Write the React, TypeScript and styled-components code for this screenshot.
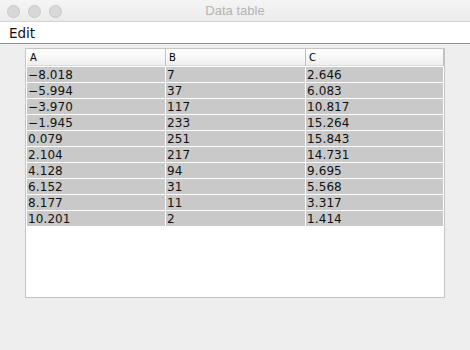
import React from "react";
import styled, { createGlobalStyle } from "styled-components";

const GlobalStyle = createGlobalStyle`
    html, body {
        margin: 0;
        padding: 0;
        background: #ececec;
    }
`;

const Window = styled.div`
    width: 470px;
    height: 350px;
    display: flex;
    flex-direction: column;
    background: #eeeeee;
    overflow: hidden;
`;

const TitleBar = styled.div`
    height: 21px;
    position: relative;
    display: flex;
    align-items: center;
    justify-content: center;
    background: linear-gradient(#f5f5f5, #ebebeb);
    border-bottom: 1px solid #d2d2d2;
`;

const Lights = styled.div`
    position: absolute;
    left: 7px;
    top: 5px;
    display: flex;
    gap: 8px;
`;

const Light = styled.span`
    width: 11px;
    height: 11px;
    border-radius: 50%;
    background: #d8d8d8;
    border: 0.5px solid #c8c8c8;
`;

const Title = styled.span`
    font-family: "Liberation Sans", Arial, sans-serif;
    font-size: 13px;
    color: #b4b4b4;
`;

const MenuBar = styled.div`
    height: 21px;
    display: flex;
    align-items: center;
    padding-left: 9px;
    background: #ffffff;
    border-bottom: 1px solid #909090;
`;

const MenuItem = styled.span`
    font-family: "DejaVu Sans", sans-serif;
    font-size: 13.5px;
    color: #111;
`;

const Content = styled.div`
    padding: 4px 25px 0 25px;
`;

const Panel = styled.div`
    height: 248px;
    background: #ffffff;
    border: 1px solid #c4c4c4;
    padding: 0 2px 0 1px;
`;

const Grid = styled.div`
    display: grid;
    grid-template-columns: 138px 139px 137px;
    column-gap: 1px;
    row-gap: 1px;
    width: 416px;
`;

const HeadCell = styled.div<{ $last?: boolean }>`
    height: 17px;
    box-sizing: border-box;
    padding: 1px 0 0 3px;
    display: flex;
    align-items: center;
    font-family: "DejaVu Sans", sans-serif;
    font-size: 10px;
    color: #000;
    background: linear-gradient(#ffffff, #efefef);
    border-bottom: 1px solid #dcdcdc;
    box-shadow: 1px 0 0 #c0c0c0;
`;

const Cell = styled.div`
    height: 15px;
    padding-left: 1px;
    display: flex;
    align-items: center;
    font-family: "DejaVu Sans", sans-serif;
    font-size: 12px;
    letter-spacing: 0.1px;
    color: #111;
    background: #c9c9c9;
`;

const rows: [string, string, string][] = [
    ["\u22128.018", "7", "2.646"],
    ["\u22125.994", "37", "6.083"],
    ["\u22123.970", "117", "10.817"],
    ["\u22121.945", "233", "15.264"],
    ["0.079", "251", "15.843"],
    ["2.104", "217", "14.731"],
    ["4.128", "94", "9.695"],
    ["6.152", "31", "5.568"],
    ["8.177", "11", "3.317"],
    ["10.201", "2", "1.414"],
];

function App() {
    return (
        <Window>
            <GlobalStyle />
            <TitleBar>
                <Lights>
                    <Light />
                    <Light />
                    <Light />
                </Lights>
                <Title>Data table</Title>
            </TitleBar>
            <MenuBar>
                <MenuItem>Edit</MenuItem>
            </MenuBar>
            <Content>
                <Panel>
                    <Grid>
                        <HeadCell>A</HeadCell>
                        <HeadCell>B</HeadCell>
                        <HeadCell $last>C</HeadCell>
                        {rows.map((r, i) =>
                            r.map((v, j) => <Cell key={`${i}-${j}`}>{v}</Cell>)
                        )}
                    </Grid>
                </Panel>
            </Content>
        </Window>
    );
}

export default App;
